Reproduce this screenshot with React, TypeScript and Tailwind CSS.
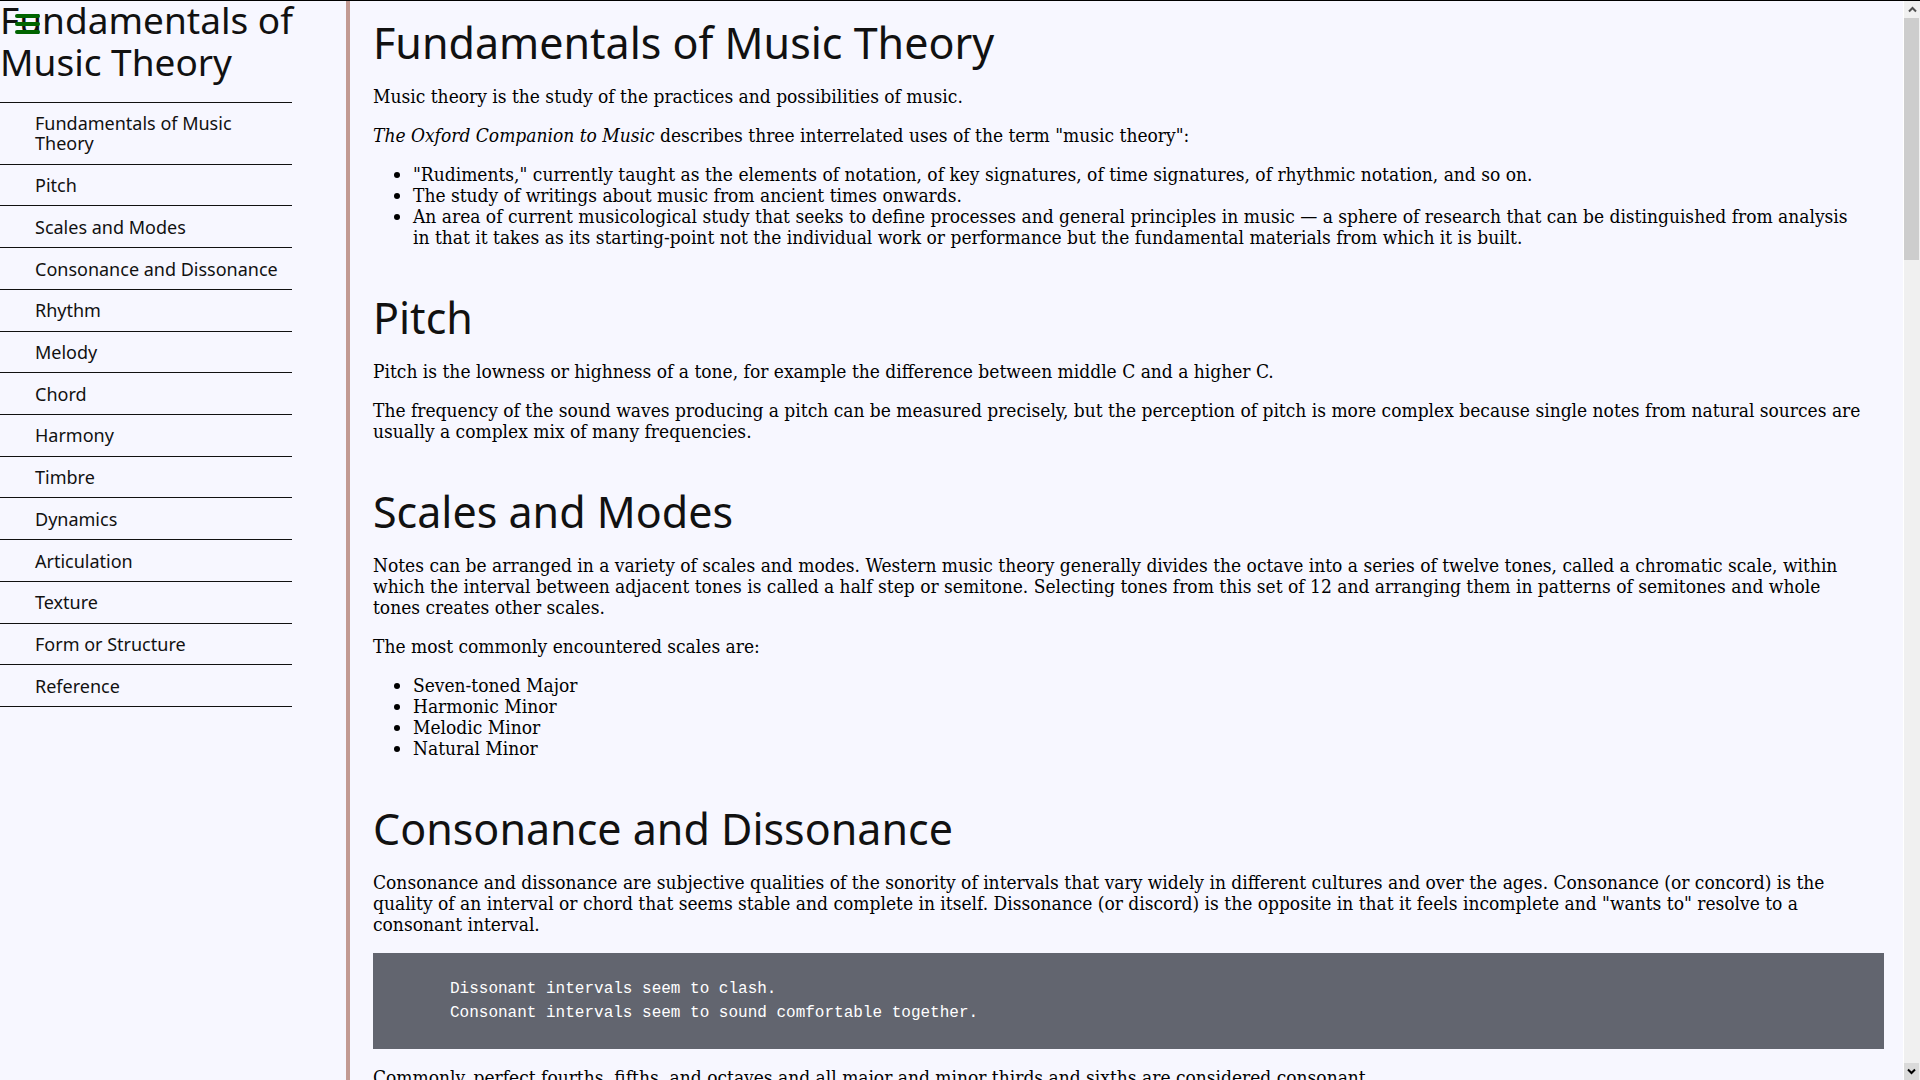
import React from 'react';

const topics = [
  'Fundamentals of Music Theory',
  'Pitch',
  'Scales and Modes',
  'Consonance and Dissonance',
  'Rhythm',
  'Melody',
  'Chord',
  'Harmony',
  'Timbre',
  'Dynamics',
  'Articulation',
  'Texture',
  'Form or Structure',
  'Reference',
];

const toId = (title: string) => title.replace(/ /g, '_');

function MenuButton() {
  return (
    <button type="button" aria-label="Toggle menu" className="absolute left-[15px] top-[13px] flex flex-col gap-1">
      <span className="h-1 w-[25px] rounded-full bg-[#006400]" />
      <span className="h-1 w-[25px] rounded-full bg-[#006400]" />
      <span className="h-1 w-[25px] rounded-full bg-[#006400]" />
    </button>
  );
}

function Sidebar() {
  return (
    <nav
      aria-label="Topics"
      className="w-[350px] shrink-0 border-r-4 border-[#c29a93] font-['Noto_Sans',sans-serif] text-[#111]"
    >
      <h1 className="-mt-0.5 whitespace-nowrap text-[37px] leading-[42px]">
        Fundamentals of
        <br />
        Music Theory
      </h1>
      <ul className="mt-[19px] flex h-[605px] w-[292px] flex-col border-t border-[#111] text-lg leading-5">
        {topics.map((topic) => (
          <li key={topic} className="flex grow items-center border-b border-[#111] py-2.5 pl-[35px]">
            <a href={`#${toId(topic)}`}>{topic}</a>
          </li>
        ))}
      </ul>
    </nav>
  );
}

function Section({ title, children }: { title: string; children: React.ReactNode }) {
  return (
    <section id={toId(title)}>
      <h2 className="mb-4 font-['Noto_Sans',sans-serif] text-[43px] leading-[54px] text-[#111]">{title}</h2>
      <div className="flex flex-col gap-[18px]">{children}</div>
    </section>
  );
}

function Bullets({ items }: { items: string[] }) {
  return (
    <ul className="list-disc pl-10">
      {items.map((item) => (
        <li key={item}>{item}</li>
      ))}
    </ul>
  );
}

function ScrollRail() {
  return (
    <div aria-hidden="true" className="flex w-[17px] shrink-0 flex-col border-l border-white bg-[#f0f0f0]">
      <div className="flex h-[17px] items-center justify-center">
        <svg width="9" height="7" viewBox="0 0 9 7" fill="none" stroke="#505050" strokeWidth="2">
          <path d="M1 5.5 4.5 2 8 5.5" />
        </svg>
      </div>
      <div className="mr-px h-[242px] bg-[#cdcdcd]" />
      <div className="grow" />
      <div className="mr-px flex h-[17px] items-center justify-center bg-[#dadada]">
        <svg width="9" height="7" viewBox="0 0 9 7" fill="none" stroke="#000" strokeWidth="2">
          <path d="M1 1.5 4.5 5 8 1.5" />
        </svg>
      </div>
    </div>
  );
}

export default function App() {
  return (
    <div className="relative flex h-screen overflow-hidden border-t border-black bg-[#f7f7ff]">
      <Sidebar />
      <main className="flex min-w-0 grow flex-col gap-[43px] overflow-hidden pl-[23px] pr-[19px] pt-[15px] font-['DejaVu_Serif_Condensed','DejaVu_Serif',serif] text-[19px] leading-[21px] text-black">
        <Section title="Fundamentals of Music Theory">
          <p>Music theory is the study of the practices and possibilities of music.</p>
          <p>
            <i>The Oxford Companion to Music</i> describes three interrelated uses of the term "music theory":
          </p>
          <Bullets
            items={[
              '"Rudiments," currently taught as the elements of notation, of key signatures, of time signatures, of rhythmic notation, and so on.',
              'The study of writings about music from ancient times onwards.',
              'An area of current musicological study that seeks to define processes and general principles in music — a sphere of research that can be distinguished from analysis in\u00a0that it takes as its starting-point not the individual work or performance but the fundamental materials from which it is built.',
            ]}
          />
        </Section>
        <Section title="Pitch">
          <p>Pitch is the lowness or highness of a tone, for example the difference between middle C and a higher C.</p>
          <p>
            The frequency of the sound waves producing a pitch can be measured precisely, but the perception of pitch is
            more complex because single notes from natural sources are usually a complex mix of many frequencies.
          </p>
        </Section>
        <Section title="Scales and Modes">
          <p>
            Notes can be arranged in a variety of scales and modes. Western music theory generally divides the octave
            into a series of twelve tones, called a chromatic scale, within which the interval between adjacent tones is
            called a half step or semitone. Selecting tones from this set of 12 and arranging them in patterns of
            semitones and whole tones&nbsp;creates other scales.
          </p>
          <p>The most commonly encountered scales are:</p>
          <Bullets items={['Seven-toned Major', 'Harmonic Minor', 'Melodic Minor', 'Natural Minor']} />
        </Section>
        <Section title="Consonance and Dissonance">
          <p>
            Consonance and dissonance are subjective qualities of the sonority of intervals that vary widely in
            different cultures and over the ages. Consonance (or concord) is the quality of an interval or chord that
            seems stable and complete in itself. Dissonance (or discord) is the opposite in that it feels incomplete and
            "wants to" resolve to a consonant interval.
          </p>
          <pre className="bg-[#62656f] py-6 pl-[77px] font-['Liberation_Mono',monospace] text-base text-white">
            <code className="font-['Liberation_Mono',monospace]">
              {'Dissonant intervals seem to clash.\nConsonant intervals seem to sound comfortable together.'}
            </code>
          </pre>
          <p>
            Commonly, perfect fourths, fifths, and octaves and all major and minor thirds and sixths are considered
            consonant.
          </p>
        </Section>
      </main>
      <ScrollRail />
      <MenuButton />
    </div>
  );
}
